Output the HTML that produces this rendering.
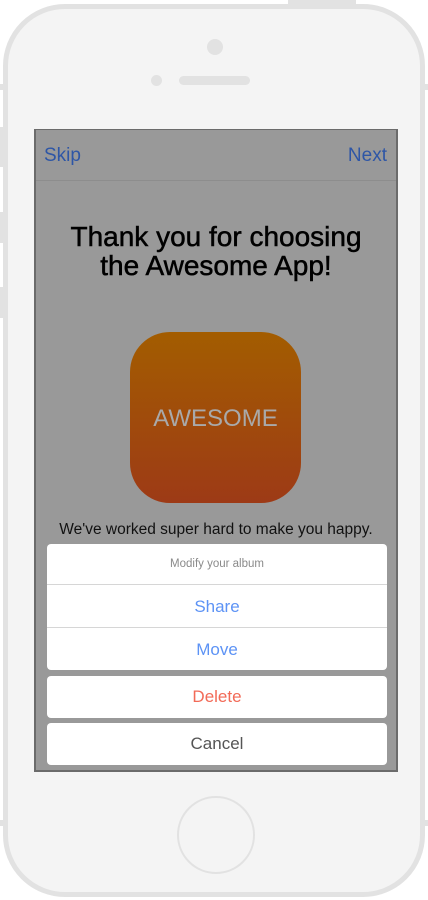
<!DOCTYPE html>
<html><head><style>
*{margin:0;padding:0;box-sizing:border-box}
body{width:428px;height:900px;background:#fff;position:relative;overflow:hidden;font-family:"Liberation Sans",sans-serif}
.a{position:absolute}
.btn{background:#e2e2e2}
.phone{left:3px;top:4px;width:422px;height:893px;border:5px solid #e2e2e2;border-radius:62px;background:#f4f4f4}
.screen{left:34px;top:129px;width:364px;height:643px;background:#999;border:2px solid #6b6b6b;border-top-width:1px}
.sheet{left:47px;width:340px;background:#fff;border-radius:4px;text-align:center}
.row{height:43px;line-height:43px;font-size:17px;border-top:1px solid #d6d6d6}
</style></head><body>
<div class="a btn" style="left:288px;top:0;width:68px;height:5px"></div>
<div class="a btn" style="left:0;top:84px;width:5px;height:6px"></div>
<div class="a btn" style="left:0;top:127px;width:5px;height:40px"></div>
<div class="a btn" style="left:0;top:212px;width:5px;height:31px"></div>
<div class="a btn" style="left:0;top:287px;width:5px;height:31px"></div>
<div class="a btn" style="left:423px;top:84px;width:5px;height:6px"></div>
<div class="a btn" style="left:0;top:820px;width:5px;height:6px"></div>
<div class="a btn" style="left:423px;top:820px;width:5px;height:6px"></div>
<div class="a phone"></div>
<div class="a" style="left:207px;top:39px;width:16px;height:16px;border-radius:50%;background:#e2e2e2"></div>
<div class="a" style="left:151px;top:75px;width:11px;height:11px;border-radius:50%;background:#e2e2e2"></div>
<div class="a" style="left:179px;top:76px;width:71px;height:9px;border-radius:5px;background:#e2e2e2"></div>
<div class="a" style="left:177px;top:796px;width:78px;height:78px;border-radius:50%;border:2px solid #e2e2e2"></div>
<div class="a screen">
  <div class="a" style="left:8px;top:15px;font-size:19px;color:#2e56a6">Skip</div>
  <div class="a" style="right:9px;top:15px;font-size:19px;color:#2e56a6">Next</div>
  <div class="a" style="left:0;top:50px;width:100%;height:1px;background:#8d8d8d"></div>
  <div class="a" style="left:0;top:92px;width:100%;text-align:center;font-size:28px;line-height:29px;color:#000;-webkit-text-stroke:0.5px #000">Thank you for choosing<br>the Awesome App!</div>
  <div class="a" style="left:94px;top:202px;width:171px;height:171px;border-radius:40px;background:linear-gradient(#a35d00,#9d3a16);color:#a9a9a9;font-size:24px;text-align:center;line-height:174px">AWESOME</div>
  <div class="a" style="left:0;top:391px;width:100%;text-align:center;font-size:15.5px;color:#111">We've worked super hard to make you happy.</div>
</div>
<div class="a sheet" style="top:544px;height:126px">
  <div style="height:40px;line-height:40px;font-size:11.5px;color:#8a8a8a">Modify your album</div>
  <div class="row" style="color:#5d93f5">Share</div>
  <div class="row" style="color:#5d93f5">Move</div>
</div>
<div class="a sheet" style="top:676px;height:42px;line-height:42px;font-size:17px;color:#f26a57">Delete</div>
<div class="a sheet" style="top:723px;height:42px;line-height:42px;font-size:17px;color:#555">Cancel</div>
</body></html>
